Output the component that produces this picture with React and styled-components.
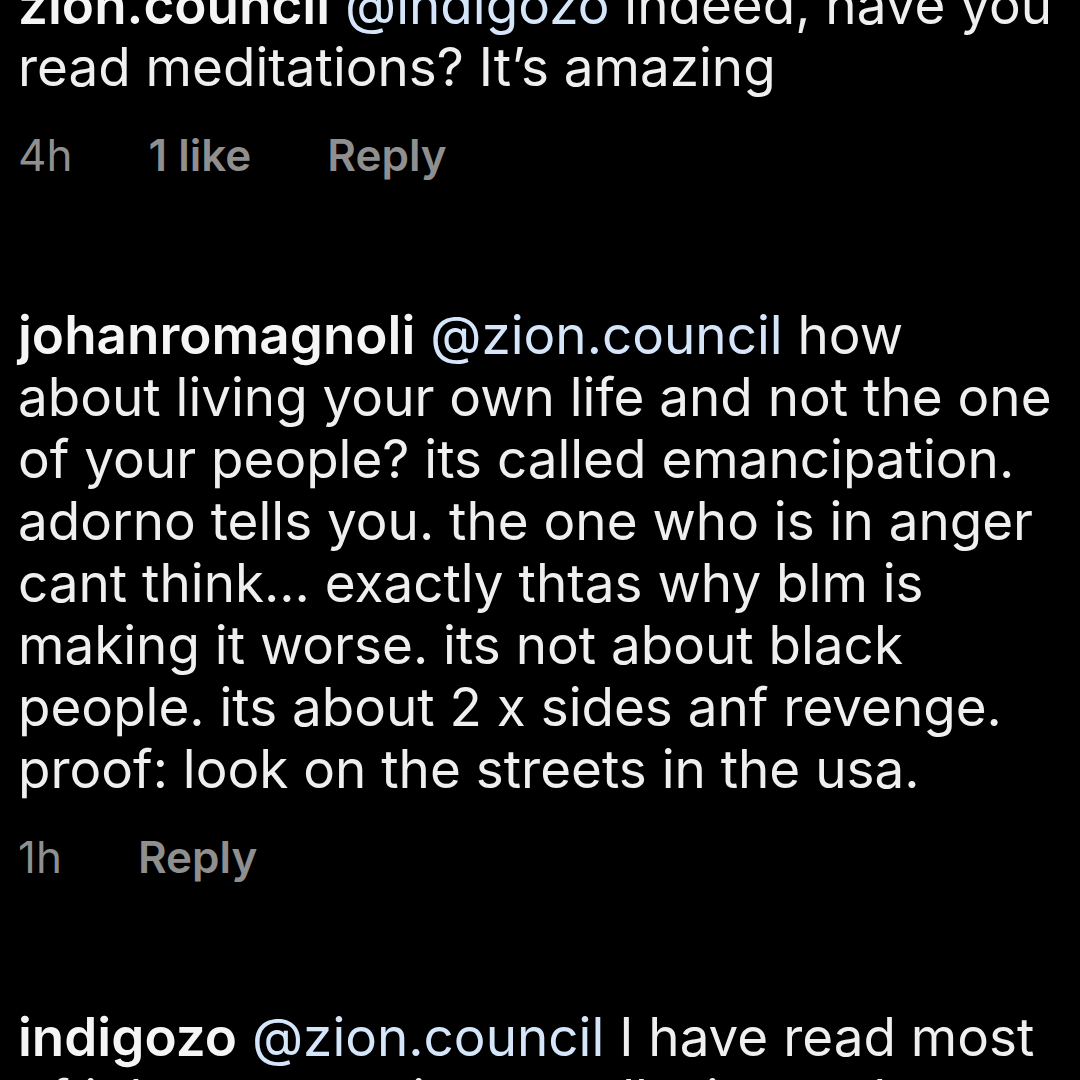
import React from "react";
import styled, { createGlobalStyle } from "styled-components";

const GlobalStyle = createGlobalStyle`
  * { box-sizing: border-box; }
  body {
    margin: 0;
    background: #000;
    color: #efefef;
    font-family: Inter, "Liberation Sans", sans-serif;
  }
`;

const Viewport = styled.main`
  height: 100vh;
  overflow: hidden;
  display: flex;
  flex-direction: column;
  justify-content: flex-start;
`;

const Thread = styled.div`
  margin-top: -26px;
  padding: 0 18px;
  display: flex;
  flex-direction: column;
  gap: 122px;
`;

const Comment = styled.article`
  display: flex;
  flex-direction: column;
  gap: 30px;
`;

const Body = styled.p`
  margin: 0;
  font-size: 53px;
  line-height: 62px;
`;

const Author = styled.a`
  color: #f5f5f5;
  font-weight: 600;
  text-decoration: none;
`;

const Mention = styled.a`
  color: #d6e6fa;
  text-decoration: none;
`;

const Meta = styled.footer`
  display: flex;
  gap: 76px;
  color: #8f8f8f;
  font-size: 44px;
  line-height: 54px;
`;

const Action = styled.button`
  padding: 0;
  border: 0;
  background: none;
  color: inherit;
  font: inherit;
  font-weight: 600;
  cursor: pointer;
`;

const comments = [
  {
    author: "zion.council",
    mention: "@indigozo",
    lines: ["indeed, have you", "read meditations? It’s amazing"],
    age: "4h",
    likes: "1 like",
  },
  {
    author: "johanromagnoli",
    mention: "@zion.council",
    lines: [
      "how",
      "about living your own life and not the one",
      "of your people? its called emancipation.",
      "adorno tells you. the one who is in anger",
      "cant think... exactly thtas why blm is",
      "making it worse. its not about black",
      "people. its about 2 x sides anf revenge.",
      "proof: look on the streets in the usa.",
    ],
    age: "1h",
  },
  {
    author: "indigozo",
    mention: "@zion.council",
    lines: ["I have read most", "of it but no one is ever all wise and"],
  },
];

export default function App() {
  return (
    <>
      <GlobalStyle />
      <Viewport>
        <Thread>
          {comments.map((c) => (
            <Comment key={c.author}>
              <Body>
                <Author href="#">{c.author}</Author>{" "}
                <Mention href="#">{c.mention}</Mention>{" "}
                {c.lines.map((line, i) => (
                  <React.Fragment key={line}>
                    {i > 0 && <br />}
                    {line}
                  </React.Fragment>
                ))}
              </Body>
              {c.age && (
                <Meta>
                  <time>{c.age}</time>
                  {c.likes && <Action type="button">{c.likes}</Action>}
                  <Action type="button">Reply</Action>
                </Meta>
              )}
            </Comment>
          ))}
        </Thread>
      </Viewport>
    </>
  );
}
